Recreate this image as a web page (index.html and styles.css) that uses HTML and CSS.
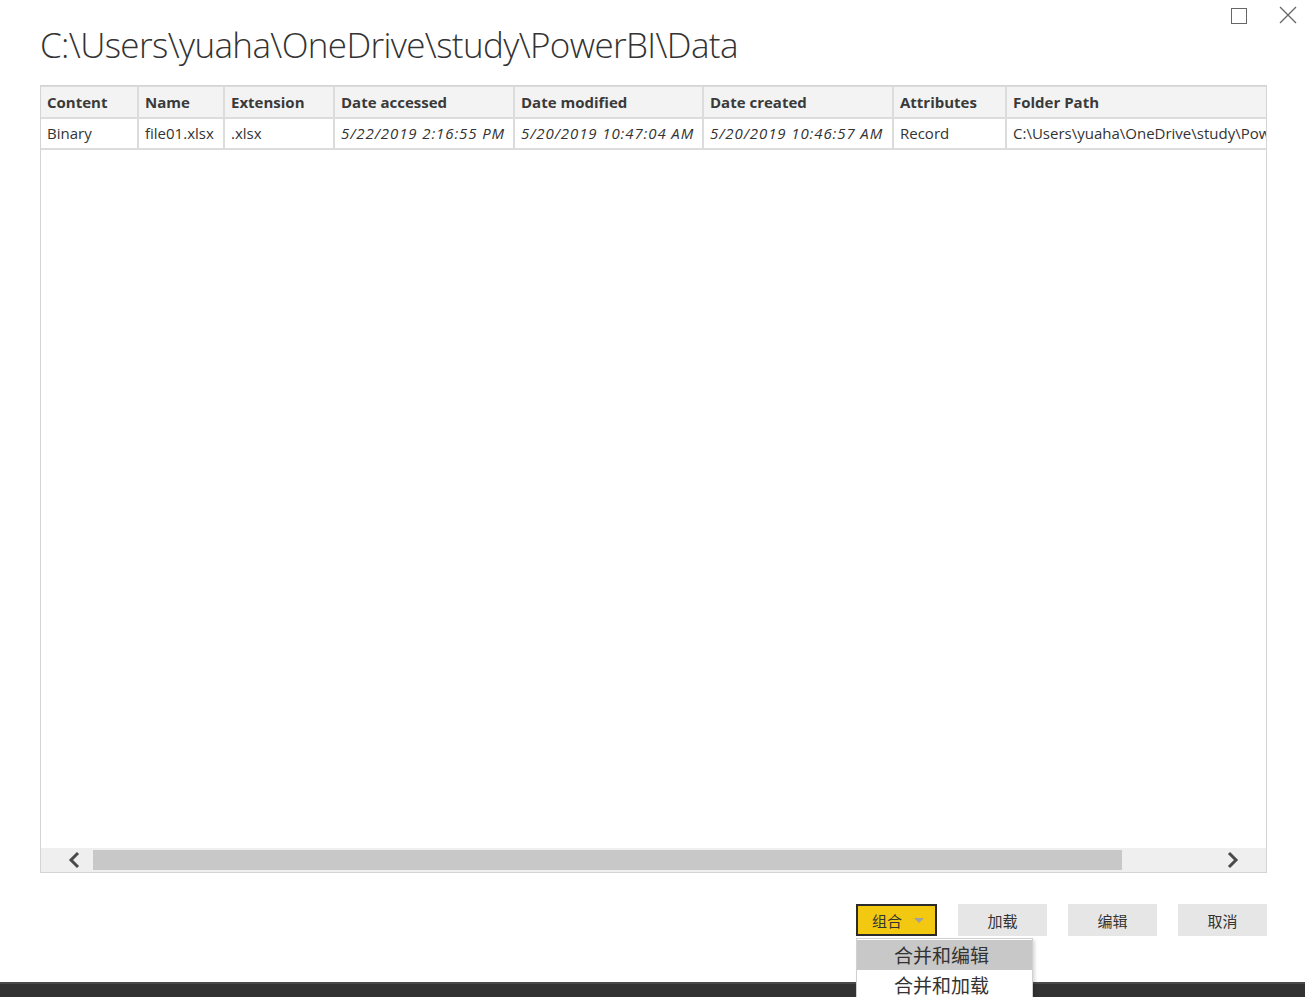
FILE: index.html
```html
<!DOCTYPE html>
<html lang="zh-CN">
<head>
<meta charset="utf-8">
<title>Folder</title>
<link rel="stylesheet" href="styles.css">
</head>
<body>
<div class="window">
  <div class="controls">
    <span class="ctl-max"></span>
    <svg class="ctl-close" width="18" height="18" viewBox="0 0 18 18"><path d="M1 1 L17 17 M17 1 L1 17" stroke="#666" stroke-width="1.3" fill="none"/></svg>
  </div>
  <header class="title-row">
    <h1 class="title">C:\Users\yuaha\OneDrive\study\PowerBI\Data</h1>
  </header>
  <section class="panel">
    <div class="grid-area">
      <table class="grid">
        <thead>
          <tr>
            <th class="c1">Content</th>
            <th class="c2">Name</th>
            <th class="c3">Extension</th>
            <th class="c4">Date accessed</th>
            <th class="c5">Date modified</th>
            <th class="c6">Date created</th>
            <th class="c7">Attributes</th>
            <th class="c8">Folder Path</th>
          </tr>
        </thead>
        <tbody>
          <tr>
            <td>Binary</td>
            <td>file01.xlsx</td>
            <td>.xlsx</td>
            <td class="it">5/22/2019 2:16:55 PM</td>
            <td class="it">5/20/2019 10:47:04 AM</td>
            <td class="it">5/20/2019 10:46:57 AM</td>
            <td>Record</td>
            <td>C:\Users\yuaha\OneDrive\study\PowerBI\Data\</td>
          </tr>
        </tbody>
      </table>
    </div>
    <div class="hscroll">
      <span class="arrow arrow-left">
        <svg width="14" height="18" viewBox="0 0 14 18"><path d="M11 2 L4 9 L11 16" stroke="#4a4a4a" stroke-width="3" fill="none"/></svg>
      </span>
      <div class="track"><div class="thumb"></div></div>
      <span class="arrow arrow-right">
        <svg width="14" height="18" viewBox="0 0 14 18"><path d="M3 2 L10 9 L3 16" stroke="#4a4a4a" stroke-width="3" fill="none"/></svg>
      </span>
    </div>
  </section>
  <div class="actions">
    <div class="combo-wrap">
      <button class="btn btn-combine">组合 <span class="caret"></span></button>
      <ul class="menu">
        <li class="menu-item active">合并和编辑</li>
        <li class="menu-item">合并和加载</li>
      </ul>
    </div>
    <button class="btn">加载</button>
    <button class="btn">编辑</button>
    <button class="btn">取消</button>
  </div>
  <div class="statusbar"></div>
</div>
</body>
</html>
```

FILE: styles.css
```css
* { box-sizing: border-box; }
html, body { margin: 0; padding: 0; background: #fff; }
body {
  width: 1305px;
  height: 997px;
  overflow: hidden;
  font-family: "Open Sans", "Noto Sans", "Noto Sans CJK SC", sans-serif;
  color: #333;
}
.window {
  position: relative;
  height: 997px;
  display: flex;
  flex-direction: column;
}
.controls {
  position: absolute;
  top: 6px;
  right: 8px;
  display: flex;
  align-items: center;
  gap: 32px;
}
.ctl-max {
  display: block;
  width: 16px;
  height: 16px;
  border: 1.5px solid #666;
  margin-top: 1px;
}
.ctl-close { display: block; }
.title-row {
  height: 85px;
  padding: 22px 0 0 40px;
}
.title {
  margin: 0;
  font-family: "Open Sans", "Noto Sans", sans-serif;
  font-weight: 300;
  font-size: 35px;
  line-height: 46px;
  color: #333;
  letter-spacing: -0.62px;
}
.panel {
  margin-left: 40px;
  width: 1227px;
  height: 788px;
  border: 1px solid #d4d4d4;
  display: flex;
  flex-direction: column;
}
.grid-area {
  flex: 1;
  overflow: hidden;
}
.grid {
  border-collapse: collapse;
  table-layout: fixed;
  width: 1400px;
  font-size: 15px;
  color: #333;
}
.grid th, .grid td {
  border: 2px solid #dcdcdc;
  border-top-width: 1px;
  height: 31px;
  padding: 0 6px;
  text-align: left;
  white-space: nowrap;
  overflow: hidden;
  line-height: 20px;
}
.grid th {
  background: #f3f3f3;
  font-weight: 700;
  color: #3a3a3a;
}
.grid tr > :first-child { border-left: none; }
.grid td.it { font-style: italic; letter-spacing: 0.9px; }
.c1 { width: 97px; }
.c2 { width: 86px; }
.c3 { width: 110px; }
.c4 { width: 180px; }
.c5 { width: 189px; }
.c6 { width: 190px; }
.c7 { width: 113px; }
.c8 { width: 435px; }
.hscroll {
  height: 24px;
  background: #efefef;
  display: flex;
  align-items: center;
}
.arrow {
  display: flex;
  align-items: center;
}
.arrow-left { width: 52px; padding-left: 26px; }
.arrow-right { width: 144px; padding-left: 104px; }
.track {
  flex: 1;
  height: 20px;
}
.thumb {
  width: 100%;
  height: 20px;
  background: #c8c8c8;
}
.actions {
  display: flex;
  justify-content: flex-end;
  gap: 21px;
  margin-top: 31px;
  padding-right: 38px;
}
.combo-wrap { position: relative; }
.btn {
  width: 89px;
  height: 32px;
  border: none;
  background: #e6e6e6;
  font-family: "Noto Sans CJK SC", sans-serif;
  font-size: 15px;
  color: #333;
  padding: 0;
  display: flex;
  align-items: center;
  justify-content: center;
}
.btn-combine {
  width: 81px;
  background: #f2c811;
  border: 2px solid #2b2b2b;
  justify-content: flex-start;
  padding-left: 14px;
  gap: 12px;
}
.caret {
  width: 0;
  height: 0;
  border-left: 5px solid transparent;
  border-right: 5px solid transparent;
  border-top: 5px solid #a0a0a0;
}
.menu {
  position: absolute;
  top: 34px;
  left: 0;
  width: 177px;
  margin: 0;
  padding: 1px 0 0;
  list-style: none;
  background: #fff;
  border: 1px solid #d0d0d0;
  box-shadow: 2px 2px 3px rgba(0,0,0,0.15);
  z-index: 2;
}
.menu-item {
  height: 30px;
  line-height: 30px;
  font-family: "Noto Sans CJK SC", sans-serif;
  font-size: 19px;
  padding-left: 37px;
  color: #333;
}
.menu-item.active { background: #c8c8c8; }
.statusbar {
  margin-top: auto;
  height: 15px;
  background: #333;
  border-top: 2px solid #4a4a4a;
}
```
